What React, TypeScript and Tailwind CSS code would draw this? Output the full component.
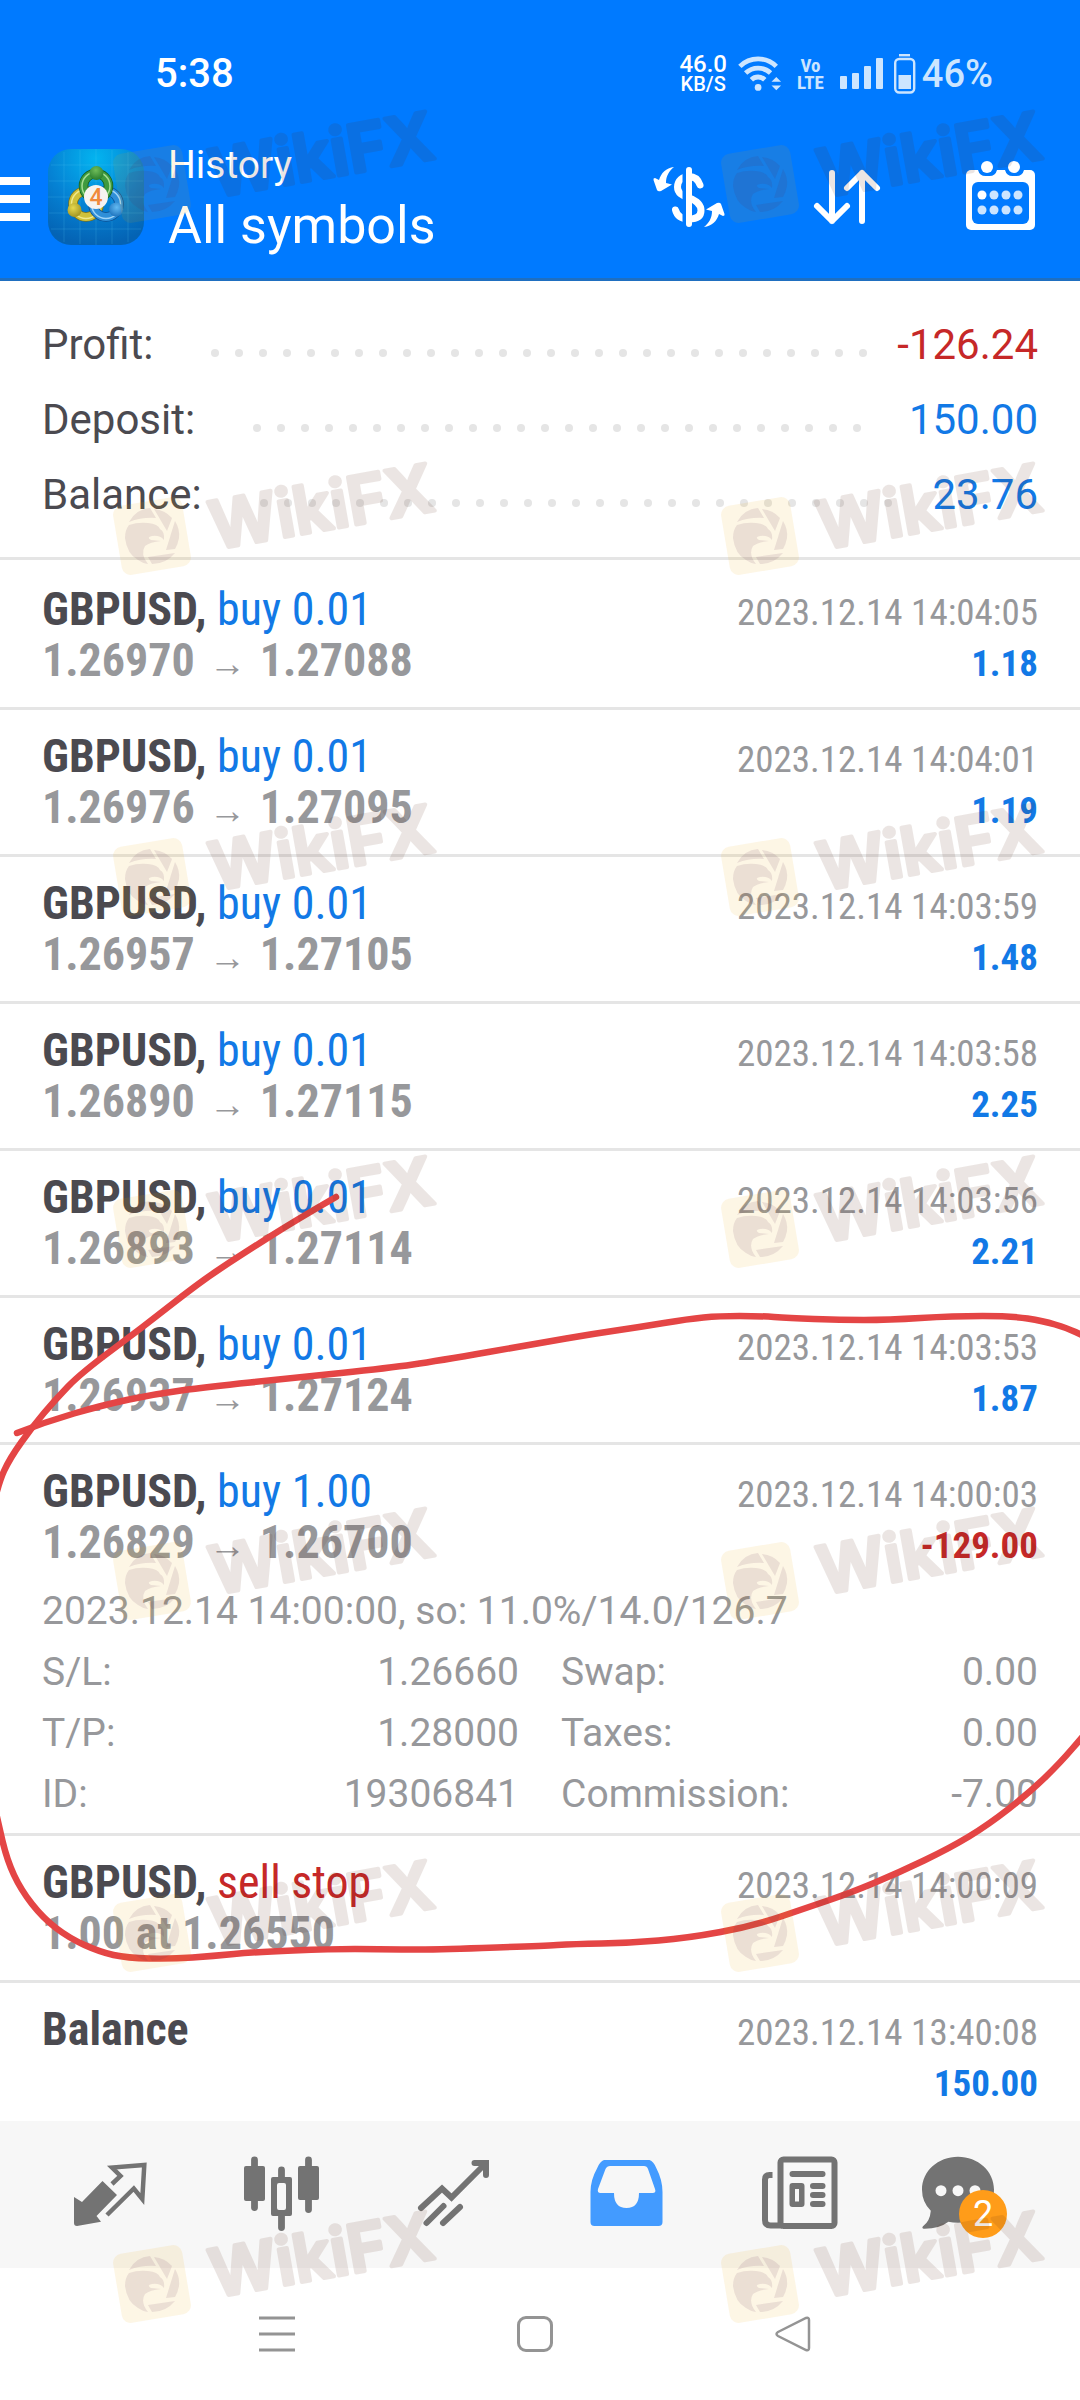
import type { ReactNode } from "react";

type Deal = {
	symbol: string;
	action?: string;
	sell?: boolean;
	from?: string;
	to?: string;
	note?: string;
	time: string;
	profit?: string;
	comment?: string;
	details?: [string, string][];
};

const summary = [
	{ label: "Profit:", value: "-126.24" },
	{ label: "Deposit:", value: "150.00" },
	{ label: "Balance:", value: "23.76" },
];

const deals: Deal[] = [
	{ symbol: "GBPUSD", action: "buy 0.01", from: "1.26970", to: "1.27088", time: "2023.12.14 14:04:05", profit: "1.18" },
	{ symbol: "GBPUSD", action: "buy 0.01", from: "1.26976", to: "1.27095", time: "2023.12.14 14:04:01", profit: "1.19" },
	{ symbol: "GBPUSD", action: "buy 0.01", from: "1.26957", to: "1.27105", time: "2023.12.14 14:03:59", profit: "1.48" },
	{ symbol: "GBPUSD", action: "buy 0.01", from: "1.26890", to: "1.27115", time: "2023.12.14 14:03:58", profit: "2.25" },
	{ symbol: "GBPUSD", action: "buy 0.01", from: "1.26893", to: "1.27114", time: "2023.12.14 14:03:56", profit: "2.21" },
	{ symbol: "GBPUSD", action: "buy 0.01", from: "1.26937", to: "1.27124", time: "2023.12.14 14:03:53", profit: "1.87" },
	{
		symbol: "GBPUSD",
		action: "buy 1.00",
		from: "1.26829",
		to: "1.26700",
		time: "2023.12.14 14:00:03",
		profit: "-129.00",
		comment: "2023.12.14 14:00:00, so: 11.0%/14.0/126.7",
		details: [
			["S/L:", "1.26660"],
			["Swap:", "0.00"],
			["T/P:", "1.28000"],
			["Taxes:", "0.00"],
			["ID:", "19306841"],
			["Commission:", "-7.00"],
		],
	},
	{ symbol: "GBPUSD", action: "sell stop", sell: true, note: "1.00 at 1.26550", time: "2023.12.14 14:00:09" },
	{ symbol: "Balance", time: "2023.12.14 13:40:08", profit: "150.00" },
];

const amountColor = (value: string) =>
	value.startsWith("-") ? "text-[#c62828]" : "text-[#1279e6]";

function StatusBar() {
	return (
		<div className="flex h-[124px] items-center pt-6 pl-[155px] pr-[87px] text-white">
			<span className="text-[40px] font-medium">5:38</span>
			<div className="ml-auto flex items-center text-[#cce5ff]">
				<div className="flex flex-col items-center font-medium text-white">
					<span className="text-[24px] leading-[20px]">46.0</span>
					<span className="text-[20px] leading-[20px]">KB/S</span>
				</div>
				<svg className="ml-[10px] h-[40px] w-[46px]" viewBox="0 0 48 40" fill="none">
					<path d="M3 12a27 27 0 0 1 38 0M9 19a19 19 0 0 1 26 0M15 26a10 10 0 0 1 14 0" stroke="currentColor" strokeWidth="5" />
					<circle cx="22" cy="34" r="3.500" fill="currentColor" />
					<path d="M36 28l5-5 5 5zM36 32h10l-5 5z" fill="currentColor" />
				</svg>
				<div className="ml-[14px] flex flex-col items-center font-['Roboto_Condensed'] font-bold">
					<span className="text-[19px] leading-[17px]">Vo</span>
					<span className="text-[19px] leading-[17px]">LTE</span>
				</div>
				<svg className="ml-4 h-[40px] w-[44px]" viewBox="0 0 44 40" fill="currentColor">
					<rect x="0" y="22" width="7" height="13" rx="1" />
					<rect x="12" y="19" width="7" height="16" rx="1" />
					<rect x="24" y="12" width="7" height="23" rx="1" />
					<rect x="36" y="4" width="7" height="31" rx="1" />
				</svg>
				<svg className="ml-[10px] h-[40px] w-[22px]" viewBox="0 0 22 40" fill="none">
					<path d="M5 1.200h11" stroke="currentColor" strokeWidth="2.400" />
					<rect x="1.200" y="5" width="19" height="33.500" rx="4" stroke="currentColor" strokeWidth="2.400" />
					<rect x="4.500" y="21" width="12.500" height="14" fill="currentColor" />
				</svg>
				<span className="ml-[6px] text-[38px] font-medium">46%</span>
			</div>
		</div>
	);
}

function AppLogo() {
	return (
		<svg className="ml-[18px] h-24 w-24" viewBox="0 0 96 96">
			<defs>
				<radialGradient id="tile" cx=".5" cy=".1" r=".9">
					<stop offset="0" stopColor="#03b4f0" />
					<stop offset=".55" stopColor="#0582d4" />
					<stop offset="1" stopColor="#0463b4" />
				</radialGradient>
				<radialGradient id="green" cx=".45" cy=".3" r=".8">
					<stop offset="0" stopColor="#6fbd5a" />
					<stop offset="1" stopColor="#1f7426" />
				</radialGradient>
				<radialGradient id="gold" cx=".4" cy=".35" r=".8">
					<stop offset="0" stopColor="#e6d94e" />
					<stop offset="1" stopColor="#94861a" />
				</radialGradient>
				<radialGradient id="azure" cx=".55" cy=".35" r=".8">
					<stop offset="0" stopColor="#62baf2" />
					<stop offset="1" stopColor="#1266b4" />
				</radialGradient>
			</defs>
			<rect width="96" height="96" rx="23" fill="url(#tile)" />
			<path d="M16 3v90M32 1v94M48 0v96M64 1v94M80 3v90M3 16h90M1 32h94M0 48h96M1 64h94M3 80h90" stroke="#5cc9f5" strokeOpacity=".2" />
			<g fill="none">
				<circle cx="38" cy="55" r="13" stroke="#7a7018" strokeWidth="9.500" />
				<circle cx="38" cy="55" r="13" stroke="#cfc13a" strokeWidth="8" />
				<circle cx="38" cy="55" r="14.500" stroke="#f0e98c" strokeWidth="1.500" />
				<circle cx="58" cy="55" r="13" stroke="#0d4f92" strokeWidth="9.500" />
				<circle cx="58" cy="55" r="13" stroke="#2f8fd8" strokeWidth="8" />
				<circle cx="58" cy="55" r="14.500" stroke="#9fd4f8" strokeWidth="1.500" />
				<circle cx="48" cy="37" r="12.500" stroke="#155c1c" strokeWidth="9.500" />
				<circle cx="48" cy="37" r="12.500" stroke="#3f9a3f" strokeWidth="8" />
				<circle cx="48" cy="37" r="14" stroke="#a5dc92" strokeWidth="1.500" />
			</g>
			<circle cx="48.500" cy="24" r="7" fill="url(#green)" />
			<circle cx="26.500" cy="61" r="7" fill="url(#gold)" />
			<circle cx="68" cy="60.500" r="7" fill="url(#azure)" />
			<circle cx="48" cy="48" r="12" fill="#f6f3f0" />
			<text x="48" y="56" textAnchor="middle" fontSize="23" fontWeight="500" fill="#f08a3c">4</text>
		</svg>
	);
}

function Header() {
	return (
		<header className="border-b-[3px] border-[#1f6fc0] bg-[#007aff] text-white">
			<StatusBar />
			<div className="flex h-[154px] items-start pr-11">
				<button type="button" aria-label="Menu" className="mt-[53px] flex w-[30px] flex-col gap-[10px]">
					<span className="h-2 bg-white" />
					<span className="h-2 bg-white" />
					<span className="h-2 bg-white" />
				</button>
				<div className="mt-[25px]">
					<AppLogo />
				</div>
				<div className="ml-6 mt-[15px]">
					<p className="text-[39px] leading-[52px]">History</p>
					<h1 className="text-[52px] leading-[69px]">All symbols</h1>
				</div>
				<button type="button" aria-label="Symbol" className="ml-auto mt-[37px]">
					<svg className="h-[72px] w-[78px]" viewBox="0 0 78 72" fill="none">
						<path
							d="M49 24C47 18 43 15.500 38 15.500 31 15.500 26.500 20 26.500 26S31 34.500 38 37 50 43 50 49.500 45 58 38 58 26 55 24.500 49"
							stroke="#fff"
							strokeWidth="7"
							strokeLinecap="round"
						/>
						<path d="M34 4v64" stroke="#007aff" strokeWidth="5" />
						<path d="M38 9v54" stroke="#fff" strokeWidth="6" strokeLinecap="round" />
						<path id="turn" d="M23 6C15 7 10 12 8 19L4 17q-2 0-1.500 2L6 29q1 2 4 1l11-6.500-6-1.500C15 15 18 10 23 6z" fill="#fff" />
						<use href="#turn" transform="rotate(180 38 36)" />
					</svg>
				</button>
				<button type="button" aria-label="Sort" className="ml-[82px] mt-[37px]">
					<svg className="h-[72px] w-[72px]" viewBox="0 0 72 72" fill="none" stroke="#fff" strokeWidth="6" strokeLinecap="round" strokeLinejoin="round">
						<path d="M21 12v48M6 45l15 15 15-15M51 60V12M36 27l15-15 15 15" />
					</svg>
				</button>
				<button type="button" aria-label="Period" className="ml-[81px] mt-[37px]">
					<svg className="h-[72px] w-[72px]" viewBox="0 0 72 72">
						<rect y="9" x="2" width="69" height="60" rx="5" fill="#fff" />
						<path d="M13 0h20v9a8 8 0 0 1-8 6h-3a8 8 0 0 1-8-6zM40 0h20v9a8 8 0 0 1-8 6h-3a8 8 0 0 1-8-6z" fill="#007aff" />
						<circle cx="23" cy="6" r="6" fill="#fff" />
						<circle cx="50" cy="6" r="6" fill="#fff" />
						<rect x="8" y="21" width="57" height="42" rx="6" fill="#007aff" />
						{[34, 49].map((y) =>
							[18, 30, 42, 54].map((x) => (
								<circle key={`${x}-${y}`} cx={x} cy={y} r="4.500" fill={x === 18 && y === 34 ? "#fff" : "#cce5ff"} />
							)),
						)}
					</svg>
				</button>
			</div>
		</header>
	);
}

// Wraps the dots so only whole ones stay visible between label and value
function DotLeader() {
	return (
		<span aria-hidden className="mt-4 mr-[18px] ml-[50px] flex h-2 flex-1 flex-wrap overflow-hidden">
			{Array.from({ length: 80 }, (_, i) => (
				<span key={i} className="flex h-2 w-6 justify-center">
					<span className="h-2 w-2 rounded-full bg-[#e5e5e5]" />
				</span>
			))}
		</span>
	);
}

function Summary() {
	return (
		<section className="border-b-[3px] border-[#e5e5e5] px-[42px] pt-[26px] pb-[25px] text-[42px] leading-[75px]">
			{summary.map((item) => (
				<div key={item.label} className="flex items-center">
					<span className="text-[#4b4a50]">{item.label}</span>
					<DotLeader />
					<span className={amountColor(item.value)}>{item.value}</span>
				</div>
			))}
		</section>
	);
}

function DealRow({ deal }: { deal: Deal }) {
	return (
		<li className={`px-[42px] pt-[21px] ${deal.details ? "pb-2" : "pb-[21px]"} border-b-[3px] border-[#e5e5e5] last:border-b-0 last:pb-[15px]`}>
			<div className="font-['Roboto_Condensed'] text-[46px] leading-[51px]">
				<div className="flex items-baseline justify-between">
					<p>
						<span className="font-bold text-[#4b4a50]">
							{deal.symbol}
							{deal.action && ","}
						</span>{" "}
						<span className={deal.sell ? "text-[#c62828]" : "text-[#1279e6]"}>{deal.action}</span>
					</p>
					<time className="text-[37px] leading-[42px] text-[#97989b]">{deal.time}</time>
				</div>
				<div className="flex items-baseline justify-between font-bold">
					<p className="text-[#97989b]">
						{deal.note}
						{deal.from && (
							<>
								{deal.from}
								<span className="mx-[14px] font-['Liberation_Sans'] text-[37px] leading-[42px]">→</span>
								{deal.to}
							</>
						)}
						{!deal.note && !deal.from && "\u00a0"}
					</p>
					{deal.profit && (
						<span className={`text-[37px] leading-[42px] ${amountColor(deal.profit)}`}>{deal.profit}</span>
					)}
				</div>
			</div>
			{deal.details && (
				<div className="mt-[13px] text-[39px] leading-[61px] text-[#97989b]">
					<p>{deal.comment}</p>
					<dl className="grid grid-cols-2 gap-x-[42px]">
						{deal.details.map(([name, value]) => (
							<div key={name} className="flex justify-between">
								<dt>{name}</dt>
								<dd>{value}</dd>
							</div>
						))}
					</dl>
				</div>
			)}
		</li>
	);
}

function Tab({ label, active, children }: { label: string; active?: boolean; children: ReactNode }) {
	return (
		<button
			type="button"
			aria-label={label}
			className={`flex flex-1 justify-center ${active ? "text-[#439bff]" : "text-[#737373]"}`}
		>
			<span className="relative">
				<svg className="h-24 w-24" viewBox="0 0 96 96" fill="currentColor">
					{children}
				</svg>
				{label === "Messages" && (
					<span className="absolute top-[44px] left-[37px] flex h-12 w-12 items-center justify-center rounded-full bg-[#ff9c19] text-[36px] leading-[48px] text-white">
						2
					</span>
				)}
			</span>
		</button>
	);
}

function TabBar() {
	return (
		<nav className="flex bg-[#f7f7f7] px-6 pt-[25px] pb-[26px]">
			<Tab label="Quotes">
				<path d="M12 51l8 5 20.500-21L55 49 34.500 70l4.500 5.700L15 80q-3 0-3-3z" />
				<path d="M50 38l8.500-8L50 21.500 82.300 19l-2 34-8.500-10.500L45 69" fill="none" stroke="currentColor" strokeWidth="4.500" />
			</Tab>
			<Tab label="Chart">
				<path d="M20.500 14v47.500M47.500 24v8M47.500 68v13.500M74.500 14v49.500" stroke="currentColor" strokeWidth="6.800" strokeLinecap="round" />
				<rect x="10" y="20" width="21" height="35" rx="2" />
				<rect x="64" y="20" width="21" height="34" rx="2" />
				<path d="M39 31h17q2 0 2 2v35q0 2-2 2H39q-2 0-2-2V33q0-2 2-2zm6 6q-2 0-2 2v23q0 2 2 2h5q2 0 2-2V39q0-2-2-2z" fillRule="evenodd" />
			</Tab>
			<Tab label="Trade">
				<g fill="none" stroke="currentColor" strokeWidth="6" strokeLinecap="round">
					<path d="M15 62l21-19.500 9.500 9L79 18" />
					<path d="M68.500 17H80v12" />
					<path d="M20.500 77l17-17M37 77l17-16" />
				</g>
			</Tab>
			<Tab label="History" active>
				<path d="M26 14h45.500q4 1 7 8.500Q84.500 34 84.500 46v30q0 4-4 4h-64q-4 0-4-4V46Q12.500 34 19 22.500 22 15 26 14zm6 6q-3 0-4.500 3L20 43q-1 4 2.500 4h13.500q0 15 12.500 15T61 47h13.500q4 0 2.500-4l-7-20q-1-3-4-3z" fillRule="evenodd" />
			</Tab>
			<Tab label="News">
				<g fill="none" stroke="currentColor" strokeWidth="6">
					<rect x="30.500" y="13.500" width="54" height="66.500" rx="3" />
					<path d="M22.500 29h-3q-4.500 0-4.500 4.500V74q0 5.500 5.500 5.500H32" />
				</g>
				<rect x="39.500" y="25" width="36" height="6" rx="3" />
				<path d="M42.500 37h9q3 0 3 3v18q0 3-3 3h-9q-3 0-3-3V40q0-3 3-3zm2.500 6v12.500h4V43z" fillRule="evenodd" />
				<rect x="60" y="37" width="15.500" height="6" rx="3" />
				<rect x="60" y="46" width="15.500" height="6" rx="3" />
				<rect x="60" y="55" width="15.500" height="6" rx="3" />
			</Tab>
			<Tab label="Messages">
				<path d="M36 10.700C56 10.700 72 25 72 43.700S56 76.700 36 76.700q-5 0-9.600-1Q17 83 1.500 82.700q-2-.7-.5-2.500 7-5 7.800-15.500Q0 56 0 43.700C0 25 16 10.700 36 10.700z" />
				<g fill="#f7f7f7">
					<circle cx="19" cy="44.700" r="5.500" />
					<circle cx="36" cy="44.700" r="5.500" />
					<circle cx="53" cy="44.700" r="5.500" />
				</g>
			</Tab>
		</nav>
	);
}

function SystemBar() {
	return (
		<div className="flex h-[132px] items-center bg-white pl-[148px] pr-[158px]">
			<button type="button" aria-label="Recent apps" className="flex flex-1 justify-center">
				<svg className="h-9 w-9" viewBox="0 0 36 36" stroke="#949494" strokeWidth="3">
					<path d="M0 2h36M0 18h36M0 34h36" />
				</svg>
			</button>
			<button type="button" aria-label="Home" className="flex flex-1 justify-center">
				<span className="h-9 w-9 rounded-[9px] border-[3px] border-[#949494]" />
			</button>
			<button type="button" aria-label="Back" className="flex flex-1 justify-center">
				<svg className="h-9 w-9" viewBox="0 0 36 36" fill="none" stroke="#949494" strokeWidth="2.500">
					<path d="M3 16L31 2q3-1 3 2v28q0 3-3 2L3 20q-3-2 0-4z" />
				</svg>
			</button>
		</div>
	);
}

function Watermark({ x, y }: { x: number; y: number }) {
	return (
		<g transform={`translate(${x} ${y})`}>
			<rect x="-35" y="-35" width="70" height="70" rx="9" transform="rotate(-9.500)" fill="#f0aa00" fillOpacity=".1" />
			{/* Eagle head inside a camera shutter */}
			<g fill="#5a2850" fillOpacity=".11">
				<path d="M-23-14Q-16-27-2-28L4-18Q-10-19-23-14z" />
				<path d="M2-27Q13-26 20-18L15-5z" />
				<path d="M23-15Q28-7 27 2 26 8 23 13L14 14z" />
				<path d="M23 17Q14 28 0 28L-4 21z" />
				<path d="M-27 2Q-27-6-23-11-14-14-4-13 6-12 8-7 13-4 12 4 8-1 0 0-6 1-1 4L9 5Q-2 6-7 10-12 18-4 28-10 27-14 24-25 18-27 2z" />
			</g>
			<g opacity=".115" transform="rotate(-10)">
				<text
					x="59"
					y="24"
					fontFamily="Inter, sans-serif"
					fontSize="66"
					fontWeight="600"
					fill="#5a2814"
					stroke="#5a2814"
					strokeWidth="4"
					strokeLinejoin="round"
				>
					WikiFX
				</text>
			</g>
		</g>
	);
}

// Smooths a freehand stroke by curving through the midpoints of its samples
function strokePath(points: number[][]) {
	const [first, ...rest] = points;
	const last = points[points.length - 1];
	const curves = rest.slice(0, -1).map(([x, y], i) => {
		const [nx, ny] = rest[i + 1];
		return `Q${x} ${y} ${(x + nx) / 2} ${(y + ny) / 2}`;
	});
	return `M${first.join(" ")}${curves.join("")}L${last.join(" ")}`;
}

const loop = [
	[336, 1197], [296, 1220], [241, 1255], [200, 1282], [143, 1327], [81, 1373], [55, 1400], [33, 1426], [10, 1458],
	[-2, 1484], [-20, 1560], [-20, 1740], [-2, 1822], [7, 1860], [21, 1890], [43, 1918], [69, 1938], [100, 1952],
	[127, 1958], [172, 1959], [213, 1956], [255, 1952], [331, 1949], [379, 1949], [424, 1950], [540, 1946],
	[574, 1944], [629, 1943], [688, 1938], [753, 1926], [809, 1907], [850, 1893], [898, 1873], [950, 1848],
	[988, 1825], [1029, 1793], [1060, 1763], [1084, 1735],
];

const arc = [
	[17, 1433], [45, 1422], [103, 1405], [155, 1394], [207, 1387], [293, 1378], [389, 1368], [437, 1361], [540, 1343],
	[592, 1334], [640, 1327], [688, 1319], [719, 1316], [760, 1316], [788, 1318], [840, 1320], [888, 1320],
	[953, 1316], [1012, 1316], [1043, 1321], [1067, 1328], [1084, 1336],
];

function Overlay() {
	return (
		<svg aria-hidden className="pointer-events-none absolute top-0 left-0 w-full" viewBox="0 0 1080 2400">
			<g fill="none" stroke="#e44545" strokeWidth="6.500" strokeLinecap="round" strokeLinejoin="round">
				<path d={strokePath(loop)} />
				<path d={strokePath(arc)} />
			</g>
			{[184, 536, 877, 1229, 1581, 1933, 2284].map((y) => (
				<g key={y}>
					<Watermark x={152} y={y} />
					<Watermark x={760} y={y} />
				</g>
			))}
		</svg>
	);
}

export default function App() {
	return (
		<div className="relative flex min-h-screen flex-col overflow-hidden bg-white font-['Roboto',sans-serif]">
			<Header />
			<main className="flex-1">
				<Summary />
				<ul className="pt-[3px]">
					{deals.map((deal) => (
						<DealRow key={deal.time} deal={deal} />
					))}
				</ul>
			</main>
			<TabBar />
			<SystemBar />
			<Overlay />
		</div>
	);
}
